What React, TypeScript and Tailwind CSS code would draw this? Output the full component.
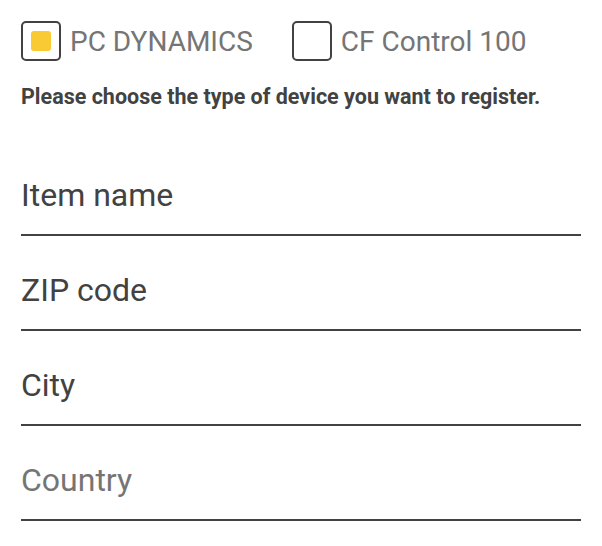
import React, { useState } from 'react';

const DEVICES = ['PC DYNAMICS', 'CF Control 100'];

const FIELDS = [
  { name: 'itemName', placeholder: 'Item name', value: 'Item name' },
  { name: 'zip', placeholder: 'ZIP code', value: 'ZIP code' },
  { name: 'city', placeholder: 'City', value: 'City' },
  { name: 'country', placeholder: 'Country', value: '' },
];

export default function App() {
  const [device, setDevice] = useState(DEVICES[0]);

  return (
    <div className="min-h-screen bg-white px-[21px] pt-[21px] font-['Roboto',sans-serif]">
      <div className="flex h-[40px] items-center gap-[39px]">
        {DEVICES.map((d) => (
          <label key={d} className="flex cursor-pointer items-center gap-[9px]" onClick={() => setDevice(d)}>
            <span className="flex h-[40px] w-[40px] items-center justify-center rounded-[5px] border-2 border-[#424242]">
              {device === d && <span className="h-[20px] w-[20px] rounded-[3px] bg-[#f9ca33]" />}
            </span>
            <span className="pt-[2px] text-[28px] leading-none text-[#757575]">{d}</span>
          </label>
        ))}
      </div>
      <p className="mt-[22px] text-[21.5px] leading-[28px] font-bold text-[#424242]">
        Please choose the type of device you want to register.
      </p>
      <form className="mt-[30px] flex flex-col">
        {FIELDS.map((f) => (
          <div key={f.name} className="flex h-[95px] items-end border-b-2 border-[#424242] pb-[21px]">
            <input
              name={f.name}
              defaultValue={f.value}
              placeholder={f.placeholder}
              className="w-full bg-transparent text-[32px] leading-[36px] text-[#424242] outline-none placeholder:text-[#757575]"
            />
          </div>
        ))}
      </form>
    </div>
  );
}
